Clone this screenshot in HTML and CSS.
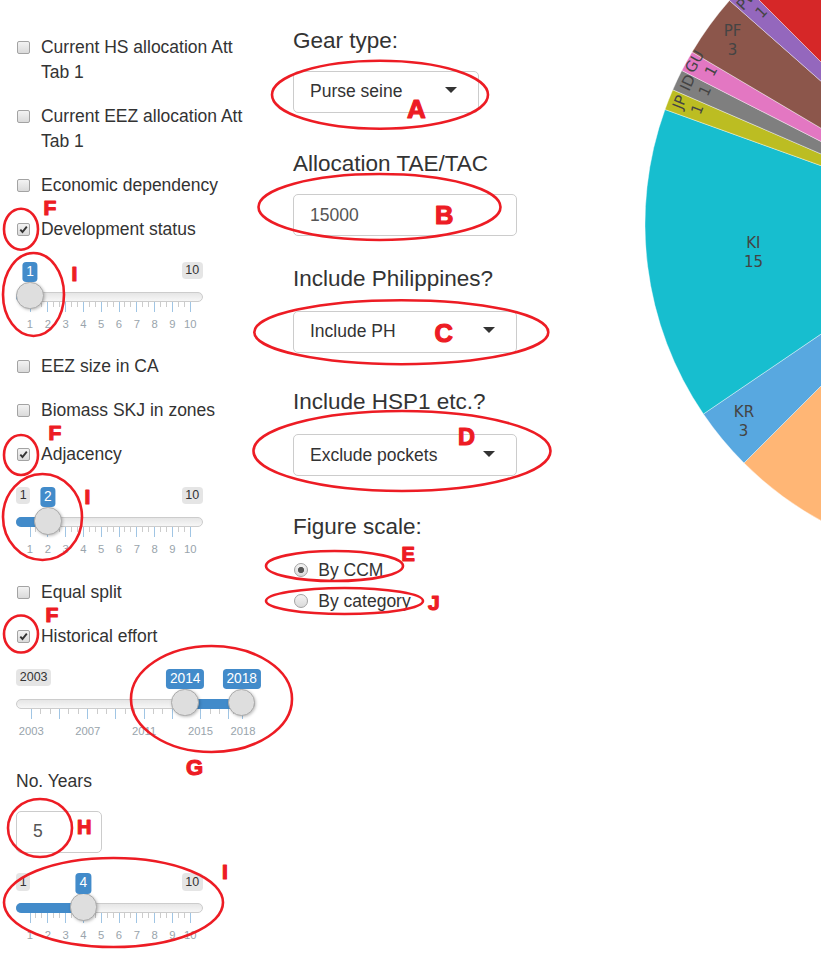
FILE: index.html
```html
<!DOCTYPE html>
<html>
<head>
<meta charset="utf-8">
<title>Allocation</title>
<link rel="stylesheet" href="styles.css">
</head>
<body>
<div class="page">
  <div class="col-left">
    <div class="cb"><span class="box"></span><span class="txt">Current HS allocation Att Tab 1</span></div>
    <div class="cb"><span class="box"></span><span class="txt">Current EEZ allocation Att Tab 1</span></div>
    <div class="cb"><span class="box"></span><span class="txt">Economic dependency</span></div>
    <div class="cb"><span class="box"><svg class="tick" viewBox="0 0 11 11"><path d="M2.3 5.6 L4.5 8 L8.8 2.6"/></svg></span><span class="txt">Development status</span></div>

    <div class="slider">
      <div class="irs-line"></div>
      <div class="irs-bar edge" style="width:14px"></div>
      <div class="irs-grid" data-start="14" data-step="17.8" data-base="1" data-majors="1,2,3,4,5,6,7,8,9,10" data-labels="1,2,3,4,5,6,7,8,9,10" data-small="2"></div>
      <span class="irs-handle" style="left:14px"></span>
      <span class="irs-max">10</span>
      <span class="irs-single" style="left:14px">1</span>
    </div>

    <div class="cb after-slider"><span class="box"></span><span class="txt">EEZ size in CA</span></div>
    <div class="cb"><span class="box"></span><span class="txt">Biomass SKJ in zones</span></div>
    <div class="cb"><span class="box"><svg class="tick" viewBox="0 0 11 11"><path d="M2.3 5.6 L4.5 8 L8.8 2.6"/></svg></span><span class="txt">Adjacency</span></div>

    <div class="slider">
      <div class="irs-line"></div>
      <div class="irs-bar edge" style="width:31.8px"></div>
      <div class="irs-grid" data-start="14" data-step="17.8" data-base="1" data-majors="1,2,3,4,5,6,7,8,9,10" data-labels="1,2,3,4,5,6,7,8,9,10" data-small="2"></div>
      <span class="irs-handle" style="left:31.8px"></span>
      <span class="irs-min">1</span>
      <span class="irs-max">10</span>
      <span class="irs-single" style="left:31.8px">2</span>
    </div>

    <div class="cb after-slider"><span class="box"></span><span class="txt">Equal split</span></div>
    <div class="cb"><span class="box"><svg class="tick" viewBox="0 0 11 11"><path d="M2.3 5.6 L4.5 8 L8.8 2.6"/></svg></span><span class="txt">Historical effort</span></div>

    <div class="slider wide">
      <div class="irs-line"></div>
      <div class="irs-bar" style="left:169.2px;width:56.5px"></div>
      <div class="irs-grid" data-start="15.3" data-step="14.11" data-base="2003" data-majors="2003,2005,2007,2009,2011,2013,2015,2017,2018" data-labels="2003,2007,2011,2015,2018" data-small="2"></div>
      <span class="irs-handle" style="left:169.2px"></span>
      <span class="irs-handle" style="left:225.7px"></span>
      <span class="irs-min">2003</span>
      <span class="irs-single" style="left:169.2px">2014</span>
      <span class="irs-single" style="left:225.7px">2018</span>
    </div>

    <div class="field-label">No. Years</div>
    <div class="num-input">5</div>

    <div class="slider after-input">
      <div class="irs-line"></div>
      <div class="irs-bar edge" style="width:67.4px"></div>
      <div class="irs-grid" data-start="14" data-step="17.8" data-base="1" data-majors="1,2,3,4,5,6,7,8,9,10" data-labels="1,2,3,4,5,6,7,8,9,10" data-small="2"></div>
      <span class="irs-handle" style="left:67.4px"></span>
      <span class="irs-min">1</span>
      <span class="irs-max">10</span>
      <span class="irs-single" style="left:67.4px">4</span>
    </div>
  </div>

  <div class="col-mid">
    <h4 class="h">Gear type:</h4>
    <div class="sel short mt-18">Purse seine<span class="caret"></span></div>
    <h4 class="h mt-38">Allocation TAE/TAC</h4>
    <div class="inp mt-18">15000</div>
    <h4 class="h mt-30">Include Philippines?</h4>
    <div class="sel mt-20">Include PH<span class="caret"></span></div>
    <h4 class="h mt-36">Include HSP1 etc.?</h4>
    <div class="sel mt-20">Exclude pockets<span class="caret"></span></div>
    <h4 class="h mt-38">Figure scale:</h4>
    <div class="radio mt-18"><span class="rb on"></span>By CCM</div>
    <div class="radio mt-6">By category</div>
  </div>

  <div class="col-plot">
    <svg class="pie" width="261" height="965" viewBox="560 0 261 965">
      <g class="slices">
        <path fill="#ffb675" d="M983,224 L924.3,556.9 A338,338 0 0,1 744.0,463.0 Z"/>
        <path fill="#58a8e0" d="M983,224 L744.0,463.0 A338,338 0 0,1 703.4,414.0 Z"/>
        <path fill="#17becf" d="M983,224 L703.4,414.0 A338,338 0 0,1 665.0,109.5 Z"/>
        <path fill="#bcbd22" d="M983,224 L665.0,109.5 A338,338 0 0,1 672.8,89.8 Z"/>
        <path fill="#7f7f7f" d="M983,224 L672.8,89.8 A338,338 0 0,1 681.8,70.5 Z"/>
        <path fill="#e377c2" d="M983,224 L681.8,70.5 A338,338 0 0,1 692.1,52.0 Z"/>
        <path fill="#8c564b" d="M983,224 L692.1,52.0 A338,338 0 0,1 729.5,0.5 Z"/>
        <path fill="#9467bd" d="M983,224 L729.5,0.5 A338,338 0 0,1 744.0,-15.0 Z"/>
        <path fill="#d62728" d="M983,224 L744.0,-15.0 A338,338 0 0,1 924.3,-108.9 Z"/>
      </g>
      <g class="pie-label">
        <text x="732.5" y="36.3">PF</text>
        <text x="732.5" y="54.7">3</text>
        <text x="753.3" y="248">KI</text>
        <text x="753.5" y="267.2">15</text>
        <text x="744" y="416.5">KR</text>
        <text x="743.5" y="435.8">3</text>
        <g transform="translate(688 105.5) rotate(-68.4)"><text y="-4">JP</text><text y="15">1</text></g>
        <g transform="translate(696 86.5) rotate(-64.8)"><text y="-4">ID</text><text y="15">1</text></g>
        <g transform="translate(702.5 66) rotate(-61.2)"><text y="-4">GU</text><text y="15">1</text></g>
        <g transform="translate(754 5.2) rotate(-46.8)"><text y="-4">PW</text><text y="15">1</text></g>
      </g>
    </svg>
  </div>
</div>

<svg class="annot" width="821" height="965" viewBox="0 0 821 965">
  <g class="ann-shapes">
    <ellipse cx="380" cy="94.7" rx="108" ry="34"/>
    <ellipse cx="379.5" cy="207" rx="121" ry="33"/>
    <ellipse cx="401.3" cy="332.2" rx="147" ry="32"/>
    <ellipse cx="402" cy="451" rx="148.5" ry="40"/>
    <ellipse cx="334.5" cy="566" rx="68.5" ry="15"/>
    <ellipse cx="344.5" cy="601" rx="78.5" ry="13"/>
    <ellipse cx="21" cy="229.2" rx="17" ry="20.5"/>
    <ellipse cx="21" cy="455" rx="17" ry="20"/>
    <ellipse cx="21" cy="634" rx="17" ry="18.5"/>
    <ellipse cx="33.5" cy="294.5" rx="30.5" ry="41.5"/>
    <ellipse cx="42.5" cy="517" rx="39.5" ry="43"/>
    <ellipse cx="211.5" cy="699" rx="80.5" ry="53"/>
    <ellipse cx="40" cy="828" rx="32" ry="29"/>
    <ellipse cx="113.5" cy="902.5" rx="109.5" ry="44.5"/>
  </g>
  <g class="ann-letters">
    <text class="l26" x="407" y="117.5">A</text>
    <text class="l25" x="435" y="223.5">B</text>
    <text class="l25" x="434.5" y="341.5">C</text>
    <text class="l23" x="458" y="445">D</text>
    <text class="l20" x="401.5" y="561">E</text>
    <text class="l21" x="428" y="610">J</text>
    <text class="l21" x="43.5" y="215">F</text>
    <text class="l21" x="48.5" y="440">F</text>
    <text class="l21" x="45.5" y="622">F</text>
    <text class="l21" x="71.5" y="280.7">I</text>
    <text class="l21" x="84.5" y="504.3">I</text>
    <text class="l21" x="222" y="879.3">I</text>
    <text class="l22" x="186" y="775">G</text>
    <text class="l20" x="77" y="834">H</text>
  </g>
</svg>
<script src="script.js"></script>
</body>
</html>
```

FILE: styles.css
```css
html, body {
  margin: 0;
  padding: 0;
  overflow: hidden;
  background: #fff;
}

body {
  position: relative;
  width: 821px;
  height: 965px;
  font-family: "Liberation Sans", Arial, sans-serif;
  color: #333;
}

.page {
  display: flex;
  width: 821px;
  height: 965px;
}

/* ---------- left column ---------- */
.col-left {
  width: 277px;
  padding: 34.5px 0 0 16px;
  display: flex;
  flex-direction: column;
  align-items: flex-start;
}

.cb {
  display: flex;
  align-items: flex-start;
  margin-top: 19px;
  font-size: 17.5px;
  line-height: 25px;
}

.cb.after-slider {
  margin-top: 20px;
}

.col-left > .cb:first-child {
  margin-top: 0;
}

.box {
  flex: none;
  width: 13px;
  height: 13px;
  box-sizing: border-box;
  margin: 6.3px 0 0 0.7px;
  border: 1px solid #a3a3a3;
  border-radius: 2px;
  background: linear-gradient(#f3f3f3, #dadada);
  display: flex;
  align-items: center;
  justify-content: center;
}

.tick {
  width: 11px;
  height: 11px;
  fill: none;
  stroke: #333;
  stroke-width: 1.9;
}

.txt {
  margin-left: 11.3px;
  width: 210px;
}

.field-label {
  margin-top: 27.6px;
  font-size: 17.5px;
  line-height: 25px;
}

.num-input {
  margin-top: 16.8px;
  width: 86px;
  height: 42px;
  box-sizing: border-box;
  border: 1px solid #ccc;
  border-radius: 5px;
  padding-left: 16px;
  display: flex;
  align-items: center;
  font-size: 17.5px;
  color: #555;
}

/* ---------- slider (ion.rangeSlider, shiny skin) ---------- */
.slider {
  position: relative;
  width: 187px;
  height: 72.6px;
  margin-top: 20px;
}

.slider.wide {
  width: 239.4px;
}

.slider.after-input {
  margin-top: 20.7px;
}

.irs-line {
  position: absolute;
  left: 0;
  right: 0;
  top: 30px;
  height: 10px;
  box-sizing: border-box;
  border: 1px solid #cccccc;
  border-radius: 16px;
  background: linear-gradient(to bottom, #dddddd -50%, #ffffff 150%);
}

.irs-bar {
  position: absolute;
  top: 30px;
  height: 10px;
  background: #428bca;
}

.irs-bar.edge {
  left: 0;
  border-radius: 16px 0 0 16px;
}

.irs-grid {
  position: absolute;
  left: 0;
  right: 0;
  top: 40px;
  height: 32px;
}

.pol {
  position: absolute;
  top: 0;
  width: 1px;
  height: 10px;
  margin-left: -0.5px;
  background: #428bca;
  opacity: 0.5;
}

.pol.small {
  height: 5px;
  background: #999;
}

.gtext {
  position: absolute;
  top: 15px;
  transform: translateX(-50%);
  font-size: 11.25px;
  line-height: 14px;
  color: #99a4ac;
  white-space: nowrap;
}

.irs-handle {
  position: absolute;
  top: 20px;
  width: 27.5px;
  height: 27.5px;
  margin-left: -13.75px;
  box-sizing: border-box;
  border: 1px solid #aaaaaa;
  border-radius: 50%;
  background: #dedede;
  box-shadow: 1px 1px 3px rgba(0, 0, 0, 0.25);
}

.irs-min,
.irs-max {
  position: absolute;
  top: 0;
  font-size: 12.5px;
  line-height: 16.7px;
  padding: 0.3px 3.75px;
  background: rgba(0, 0, 0, 0.1);
  border-radius: 3.75px;
  color: #333;
}

.irs-min {
  left: 0;
}

.irs-max {
  right: 0;
}

.irs-single {
  position: absolute;
  top: 0;
  transform: translateX(-50%);
  font-size: 13.75px;
  line-height: 18.3px;
  padding: 1px 3.75px;
  background: #428bca;
  color: #fff;
  border-radius: 3.75px;
  white-space: nowrap;
}

/* ---------- middle column ---------- */
.col-mid {
  width: 267px;
  padding-top: 27.5px;
  display: flex;
  flex-direction: column;
  align-items: flex-start;
}

.h {
  margin: 0;
  font-size: 22.5px;
  line-height: 25px;
  font-weight: normal;
  color: #333;
}

.sel,
.inp {
  width: 224px;
  height: 42px;
  box-sizing: border-box;
  border: 1px solid #cccccc;
  border-radius: 5px;
  display: flex;
  align-items: center;
  justify-content: space-between;
  padding: 0 21.5px 0 16px;
  font-size: 17.5px;
  color: #333;
  background: #fff;
}

.sel.short {
  width: 186px;
}

.inp {
  color: #555;
}

.caret {
  width: 0;
  height: 0;
  margin-top: -3px;
  border-left: 6.25px solid transparent;
  border-right: 6.25px solid transparent;
  border-top: 6.25px solid #333;
}

.radio {
  display: flex;
  align-items: center;
  font-size: 17.5px;
  line-height: 25px;
}

.radio::before {
  content: "";
  flex: none;
  width: 14px;
  height: 14px;
  box-sizing: border-box;
  margin: 0 10.6px 0 0.7px;
  border: 1px solid #a3a3a3;
  border-radius: 50%;
  background: linear-gradient(#f3f3f3, #dadada);
}

.radio .rb {
  display: none;
}

.radio:has(.rb.on)::before {
  background: radial-gradient(circle, #555 0 2.8px, transparent 3.3px), linear-gradient(#f3f3f3, #dadada);
}

.mt-6 { margin-top: 6.1px; }
.mt-18 { margin-top: 18.4px; }
.mt-20 { margin-top: 20px; }
.mt-30 { margin-top: 29.7px; }
.mt-36 { margin-top: 36.3px; }
.mt-38 { margin-top: 38px; }

/* ---------- plot ---------- */
.col-plot {
  width: 261px;
  height: 965px;
}

.pie {
  display: block;
}

.slices path {
  stroke: #ffffff;
  stroke-width: 0.4;
}

.pie-label text {
  font-family: "DejaVu Sans", Verdana, sans-serif;
  font-size: 15px;
  fill: #444;
  text-anchor: middle;
}

/* ---------- annotations ---------- */
.annot {
  position: absolute;
  left: 0;
  top: 0;
  pointer-events: none;
}

.ann-shapes ellipse {
  fill: none;
  stroke: #ed1c24;
  stroke-width: 2.6;
}

.ann-letters text {
  font-family: "Liberation Sans", Arial, sans-serif;
  font-weight: bold;
  fill: #ed1c24;
  stroke: #ed1c24;
  stroke-width: 1.2;
  stroke-linejoin: round;
}

.l20 { font-size: 20px; }
.l21 { font-size: 21px; }
.l22 { font-size: 22px; }
.l23 { font-size: 23.5px; }
.l25 { font-size: 25.5px; }
.l26 { font-size: 26px; }
```

FILE: script.js
```js
document.querySelectorAll('.irs-grid').forEach(function (g) {
  var start = parseFloat(g.dataset.start);
  var step = parseFloat(g.dataset.step);
  var base = parseFloat(g.dataset.base);
  var majors = g.dataset.majors.split(',').map(Number);
  var labels = g.dataset.labels.split(',').map(Number);
  var small = parseInt(g.dataset.small, 10);

  function pos(v) { return start + (v - base) * step; }

  function add(cls, x, text) {
    var el = document.createElement('span');
    el.className = cls;
    el.style.left = x.toFixed(2) + 'px';
    if (text !== undefined) el.textContent = text;
    g.appendChild(el);
  }

  majors.forEach(function (v, i) {
    if (i > 0) {
      var a = pos(majors[i - 1]);
      var b = pos(v);
      for (var z = 1; z <= small; z++) {
        add('pol small', a + (b - a) * z / (small + 1));
      }
    }
    add('pol', pos(v));
  });

  labels.forEach(function (v) { add('gtext', pos(v), String(v)); });
});
```
